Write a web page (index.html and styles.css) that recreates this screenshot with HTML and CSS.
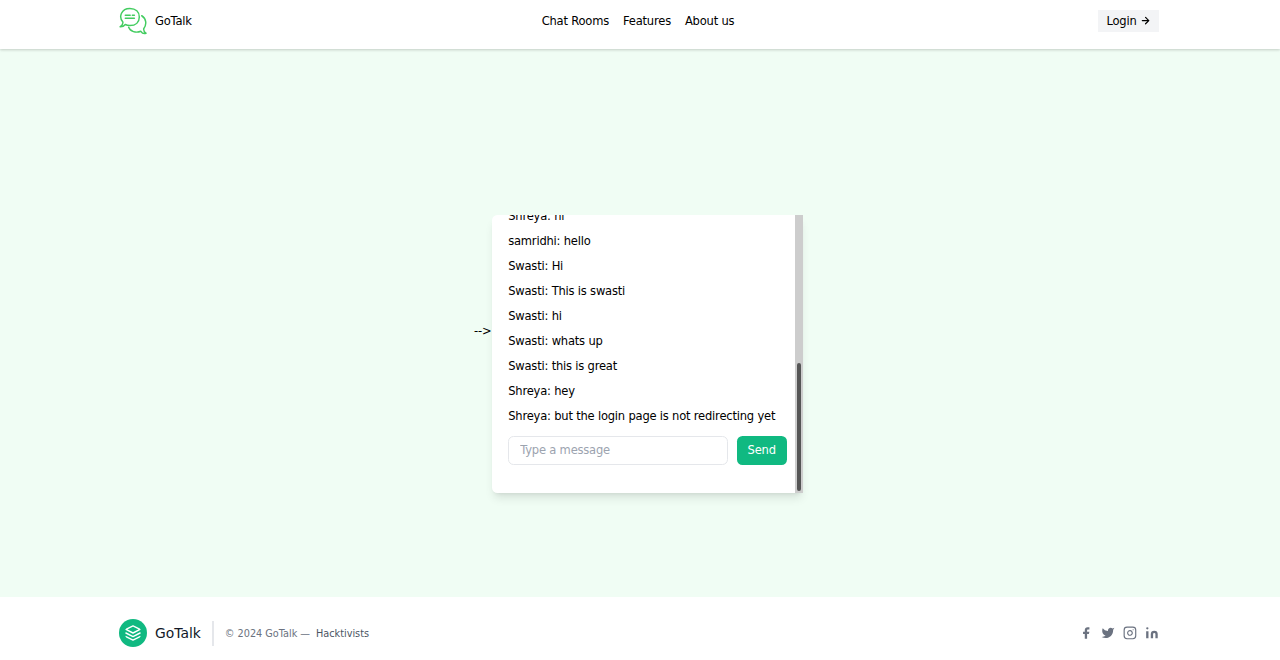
FILE: index.html
```html
<!DOCTYPE html>
<html lang="en">
<head>
<meta charset="utf-8">
<title>GoTalk</title>
<link rel="stylesheet" href="styles.css">
</head>
<body>
<header class="header">
  <div class="container header-row">
    <a class="brand">
      <svg class="brand-icon" viewBox="0 0 40 40" fill="none" stroke="#43cc60" stroke-width="2.1" stroke-linejoin="round" stroke-linecap="round">
        <path d="M5.500 21.500C-1 14 3.500 2 15.500 2C24 2 29 7 29 14.200C29 21.500 24 26.500 15.500 26.500C12.500 26.500 10.800 26 9 25C7 27.500 4.500 28.500 1.500 28.300C4.500 26.500 6 24.500 5.500 21.500Z"/>
        <path d="M32.500 12.500C39 16.500 40 25 35.300 31C35 34 36 36 38.500 37.500C35.500 38.500 33 37.500 31.300 34.700C24 37.500 16 35 13.800 29"/>
        <path d="M9 11.700H16M19 11.700H22M9 16H22"/>
      </svg>
      <span>GoTalk</span>
    </a>
    <nav class="nav"><a>Chat Rooms</a><a>Features</a><a>About us</a></nav>
    <button class="login">Login
      <svg class="login-icon" viewBox="0 0 24 24" fill="none" stroke="currentColor" stroke-width="2.600" stroke-linecap="round" stroke-linejoin="round"><path d="M5 12h14M12 5l7 7-7 7"/></svg>
    </button>
  </div>
</header>
<main class="main">
  <span class="arrow">--&gt;</span>
  <section class="chat">
    <div class="chat-body">
      <div class="messages">
        <p>Shreya: hi</p>
        <p>samridhi: hello</p>
        <p>Swasti: Hi</p>
        <p>Swasti: This is swasti</p>
        <p>Swasti: hi</p>
        <p>Swasti: whats up</p>
        <p>Swasti: this is great</p>
        <p>Shreya: hey</p>
        <p>Shreya: but the login page is not redirecting yet</p>
      </div>
      <form class="compose">
        <input class="field" type="text" placeholder="Type a message">
        <button class="send" type="button">Send</button>
      </form>
    </div>
    <div class="track"><div class="thumb"></div></div>
  </section>
</main>
<footer class="footer">
  <div class="container footer-row">
    <a class="footer-brand">
      <svg class="stack" viewBox="0 0 24 24" fill="none" stroke="currentColor" stroke-width="2" stroke-linecap="round" stroke-linejoin="round"><path d="M12 2L2 7l10 5 10-5-10-5zM2 17l10 5 10-5M2 12l10 5 10-5"/></svg>
      <span>GoTalk</span>
    </a>
    <p class="copyright">© 2024 GoTalk —<a class="author">Hacktivists</a></p>
    <div class="social">
      <svg viewBox="0 0 24 24" fill="currentColor"><path d="M18 2h-3a5 5 0 00-5 5v3H7v4h3v8h4v-8h3l1-4h-4V7a1 1 0 011-1h3z"/></svg>
      <svg viewBox="0 0 24 24" fill="currentColor"><path d="M23 3a10.900 10.900 0 01-3.140 1.530 4.480 4.480 0 00-7.860 3v1A10.660 10.660 0 013 4s-4 9 5 13a11.640 11.640 0 01-7 2c9 5 20 0 20-11.500a4.500 4.500 0 00-.080-.830A7.720 7.720 0 0023 3z"/></svg>
      <svg viewBox="0 0 24 24" fill="none" stroke="currentColor" stroke-width="2" stroke-linecap="round" stroke-linejoin="round"><rect x="2" y="2" width="20" height="20" rx="5"/><path d="M16 11.370A4 4 0 1112.630 8 4 4 0 0116 11.370zm1.500-4.870h.010"/></svg>
      <svg viewBox="0 0 24 24" fill="currentColor"><path d="M16 8a6 6 0 016 6v7h-4v-7a2 2 0 00-4 0v7h-4v-7a6 6 0 016-6zM2 9h4v12H2z"/><circle cx="4" cy="4" r="2"/></svg>
    </div>
  </div>
</footer>
</body>
</html>
```
FILE: styles.css
```css
* { box-sizing: border-box; margin: 0; padding: 0; }
html { font-size: 11.111px; }
body {
  height: 660px;
  display: flex;
  flex-direction: column;
  overflow: hidden;
  background: #fff;
  color: #000;
  font-family: "DejaVu Sans", sans-serif;
  font-size: 11.520px;
  letter-spacing: -.2px;
  line-height: 17px;
}
button, input { font: inherit; letter-spacing: inherit; border: 0; }
svg { display: block; flex: none; }
.container { width: 1041px; margin: 0 120px 0 119px; }
.header {
  height: 49px;
  flex: none;
  position: relative;
  box-shadow: 0 1px 3px rgba(0, 0, 0, .14), 0 1px 2px rgba(0, 0, 0, .06);
}
.header-row {
  display: grid;
  grid-template-columns: 1fr auto 1fr;
  align-items: center;
  height: 42px;
}
.brand { display: flex; align-items: center; gap: 8px; }
.brand-icon { width: 28px; height: 28px; }
.nav { display: flex; gap: 14px; margin-right: 3px; }
.login {
  justify-self: end;
  display: flex;
  align-items: center;
  gap: 3px;
  width: 61px;
  height: 22px;
  margin-right: 1px;
  padding: 0 8px 0 8.500px;
  background: #f3f4f6;
}
.login-icon { width: 1rem; height: 1rem; }
.main {
  height: 548px;
  flex: none;
  display: flex;
  padding: 166px 0 0 474px;
  background: #f0fdf4;
}
.arrow { width: 18px; padding-top: 108px; flex: none; }
.chat {
  width: 311px;
  height: 278px;
  display: flex;
  background: #fff;
  border-radius: 5.500px 0 0 5.500px;
  box-shadow: 0 7px 10px -2px rgba(0, 0, 0, .1), 0 3px 4px -3px rgba(0, 0, 0, .1);
}
.chat-body {
  width: 303px;
  padding: 0 8px 28px 16.200px;
  display: flex;
  flex-direction: column;
  justify-content: flex-end;
  overflow: hidden;
}
.messages p { height: 25px; white-space: nowrap; }
.compose { display: flex; gap: 9px; margin-top: 3px; flex: none; }
.field {
  width: 219.500px;
  height: 29px;
  padding: 0 11px 1px;
  border: 1px solid #e5e7eb;
  border-radius: 5.500px;
  background: #fff;
}
.field::placeholder { color: #9ca3af; opacity: 1; }
.send {
  width: 50px;
  height: 29px;
  border-radius: 5.500px;
  background: #10b981;
  color: #fff;
}
.track {
  width: 8px;
  padding: 0 2px 2px;
  display: flex;
  align-items: flex-end;
  background: #cdcdcd;
}
.thumb { width: 4px; height: 128px; border-radius: 2px; background: #555; }
.footer { flex: 1; }
.footer-row { display: flex; align-items: center; height: 72px; }
.footer-brand {
  display: flex;
  align-items: center;
  gap: 8px;
  font-size: 13.890px;
  letter-spacing: 0;
  color: #111827;
}
.stack {
  width: 28px;
  height: 28px;
  padding: 5.500px;
  border-radius: 50%;
  background: #10b981;
  color: #fff;
}
.copyright {
  display: flex;
  align-items: center;
  height: 25px;
  margin-left: 11px;
  padding-left: 11px;
  border-left: 2px solid #e5e7eb;
  font-size: 9.720px;
  letter-spacing: -.02px;
  color: #6b7280;
}
.author { margin-left: 6px; color: #4b5563; }
.social { display: flex; gap: .75rem; margin-left: auto; margin-right: 1px; color: #6b7280; }
.social svg { width: 1.25rem; height: 1.25rem; }
```
